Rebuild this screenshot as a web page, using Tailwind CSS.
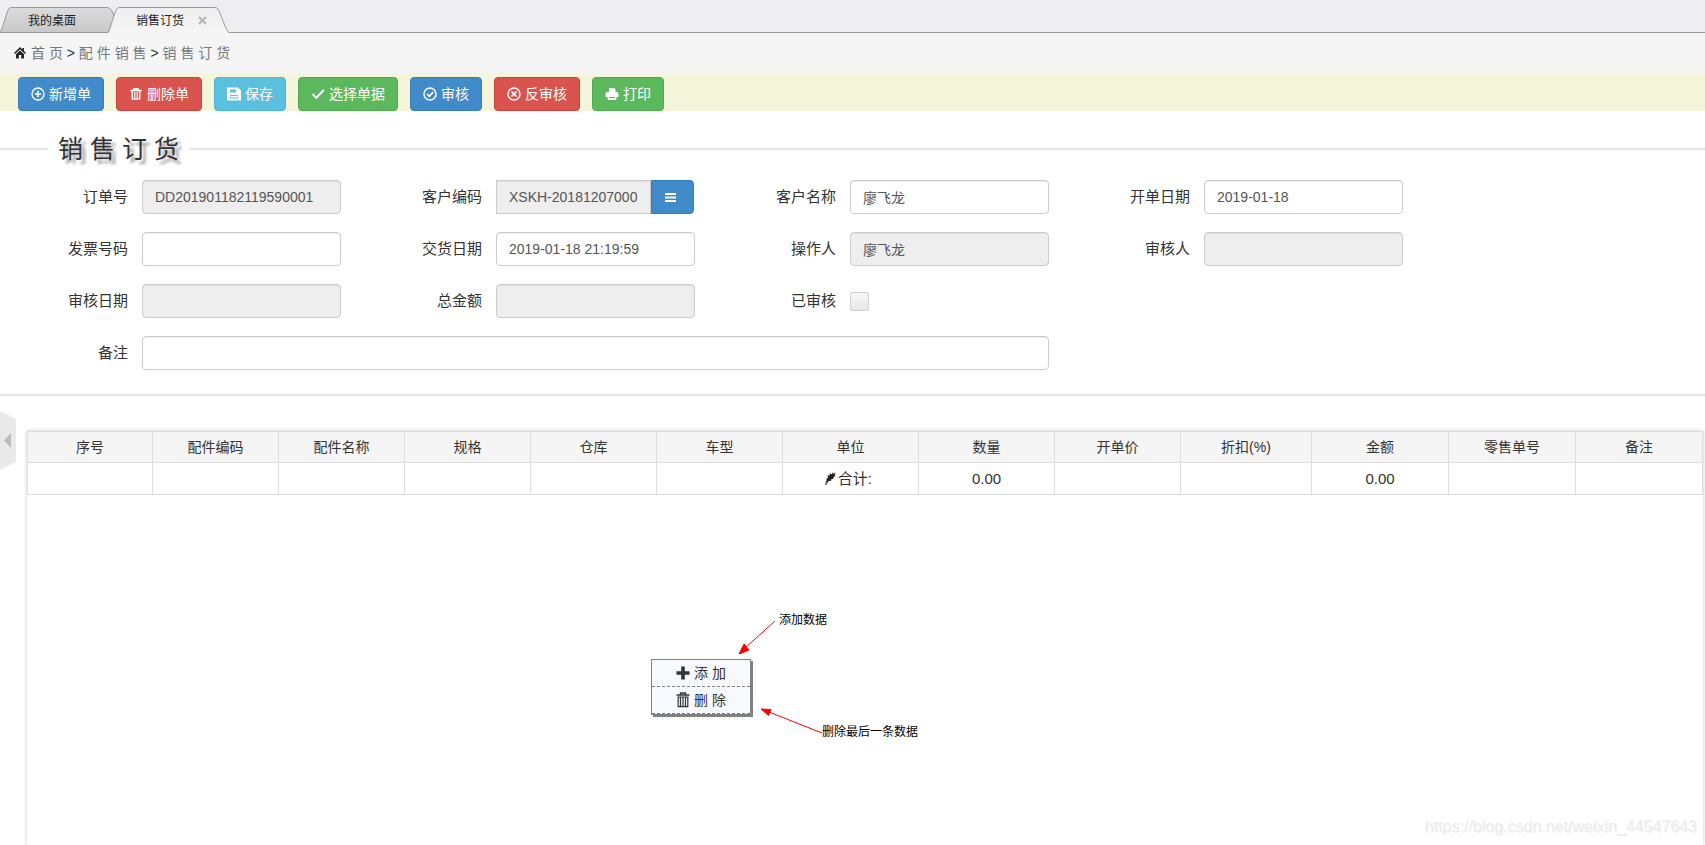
<!DOCTYPE html>
<html lang="zh-CN">
<head>
<meta charset="utf-8">
<title>销售订货</title>
<script src="https://cdn.jsdelivr.net/npm/@tailwindcss/browser@4"></script>
</head>
<body class="relative flex min-h-screen flex-col bg-white font-['Liberation_Sans','Noto_Sans_CJK_SC',sans-serif] text-sm text-[#333]">

<!-- Tabs -->
<nav class="relative flex h-[33px] items-end bg-[#eeeef0] text-xs text-[#222]">
  <div class="absolute inset-x-0 bottom-0 h-px bg-[#999]"></div>
  <a href="#" class="relative flex h-[26px] w-[108px] items-center pl-7">
    <svg class="absolute bottom-0 left-0" width="117" height="26" viewBox="0 0 117 26">
      <defs><linearGradient id="tabIdle" x1="0" y1="0" x2="0" y2="1"><stop offset="0" stop-color="#dcdcdc"/><stop offset="1" stop-color="#c8c8c8"/></linearGradient></defs>
      <path d="M0 25.5C2 24 7 3 9 1.5Q10 .5 12 .5H107Q110 .5 112 4L115 11L108 25.5Z" fill="url(#tabIdle)" stroke="#999"/>
    </svg>
    <span class="relative pt-0.5">我的桌面</span>
  </a>
  <div class="relative flex h-[26px] w-[121px] items-center pl-7">
    <svg class="absolute bottom-0 left-0" width="121" height="26" viewBox="0 0 121 26">
      <defs><linearGradient id="tabOn" x1="0" y1="0" x2="0" y2="1"><stop offset="0" stop-color="#eeeeef"/><stop offset="1" stop-color="#f5f5f5"/></linearGradient></defs>
      <path d="M0 26C2 24 7 3 9 1.5Q10 .5 12 .5H107Q109 .5 110 2C112 5 118 24 121 26Z" fill="url(#tabOn)"/>
      <path d="M0 25.5C2 24 7 3 9 1.5Q10 .5 12 .5H107Q109 .5 110 2C112 5 118 24 121 25.5" fill="none" stroke="#999"/>
    </svg>
    <a href="#" class="relative pt-0.5">销售订货</a>
    <button type="button" aria-label="关闭" class="relative ml-3.5">
      <svg width="9" height="9" viewBox="0 0 9 9"><path d="M1 1L8 8M8 1L1 8" stroke="#b4b4b8" stroke-width="2"/></svg>
    </button>
  </div>
</nav>

<!-- Breadcrumb -->
<div class="flex h-10 items-center bg-[#f5f5f5] pl-3.5 text-[#777]">
  <svg class="mr-[5px]" width="12" height="12" viewBox="0 0 12 12" fill="#222"><path d="M6 0L0 6L1 7L6 2.300L11 7L12 6L10 4V1H8.500V2.500Z"/><path d="M2 7.300L6 3.600L10 7.300V11.500H7.200V8H4.800V11.500H2Z"/></svg>
  <p class="whitespace-pre"><a href="#">首 页</a> <span class="text-[#333]">&gt;</span> <a href="#">配 件 销 售</a> <span class="text-[#333]">&gt;</span> <a href="#">销 售 订 货</a></p>
</div>

<!-- Toolbar -->
<div class="flex flex-wrap gap-3 bg-[#f5f5dc] pt-1 pl-[18px] text-white">
  <button type="button" class="flex h-[34px] items-center gap-1 rounded border border-[#357ebd] bg-[#428bca] px-3">
    <svg width="14" height="14" viewBox="0 0 14 14" fill="none" stroke="currentColor"><circle cx="7" cy="7" r="6" stroke-width="1.300"/><path d="M7 3.800V10.200M3.800 7H10.200" stroke-width="1.500"/></svg>新增单</button>
  <button type="button" class="flex h-[34px] items-center gap-1 rounded border border-[#d43f3a] bg-[#d9534f] px-3">
    <svg width="14" height="14" viewBox="0 0 14 14" fill="none" stroke="currentColor"><path d="M1.500 3.500H12.500M5 3V1.800H9V3" stroke-width="1.500"/><path d="M3.300 4V12H10.700V4" stroke-width="1.500"/><path d="M5.500 5V11M7 5V11M8.500 5V11" stroke-width=".8"/></svg>删除单</button>
  <button type="button" class="flex h-[34px] items-center gap-1 rounded border border-[#46b8da] bg-[#5bc0de] px-3">
    <svg width="14" height="14" viewBox="0 0 14 14" fill="currentColor"><path fill-rule="evenodd" d="M0 .5H11L14 3.500V13.500H0ZM3 2.500V5.500H9V2.500ZM3 8V11.500H11V8Z"/><path d="M3.500 9H10.500V10.500H3.500Z"/></svg>保存</button>
  <button type="button" class="flex h-[34px] items-center gap-1 rounded border border-[#4cae4c] bg-[#5cb85c] px-3">
    <svg width="14" height="14" viewBox="0 0 14 14" fill="none" stroke="currentColor"><path d="M1.500 7L5.300 10.800L12.800 3" stroke-width="2"/></svg>选择单据</button>
  <button type="button" class="flex h-[34px] items-center gap-1 rounded border border-[#357ebd] bg-[#428bca] px-3">
    <svg width="14" height="14" viewBox="0 0 14 14" fill="none" stroke="currentColor"><circle cx="7" cy="7" r="6" stroke-width="1.500"/><path d="M4 7L6.300 9.300L10.200 5" stroke-width="1.700"/></svg>审核</button>
  <button type="button" class="flex h-[34px] items-center gap-1 rounded border border-[#d43f3a] bg-[#d9534f] px-3">
    <svg width="14" height="14" viewBox="0 0 14 14" fill="none" stroke="currentColor"><circle cx="7" cy="7" r="6" stroke-width="1.500"/><path d="M4.500 4.500L9.500 9.500M9.500 4.500L4.500 9.500" stroke-width="1.600"/></svg>反审核</button>
  <button type="button" class="flex h-[34px] items-center gap-1 rounded border border-[#4cae4c] bg-[#5cb85c] px-3">
    <svg width="14" height="14" viewBox="0 0 14 14" fill="currentColor"><path d="M4 1H9L10.500 2.500V5H4Z"/><path d="M2 5H12Q13.500 5.500 13.500 7V10H.5V7Q.5 5.500 2 5Z"/><path d="M2.500 9H11.500V12L10.500 13H3.500L2.500 12Z"/><path d="M4 10.500H10" stroke="#5cb85c" fill="none"/></svg>打印</button>
</div>

<!-- Order form -->
<form class="mt-[19px] border-b-2 border-[#e5e5e5] pb-6">
  <div class="mb-3 flex h-[38px] items-center">
    <div class="h-0.5 w-12 bg-[#e5e5e5]"></div>
    <h1 class="px-2.5 text-[25px] leading-[38px] [text-shadow:4px_4px_3px_#999]">销 售 订 货</h1>
    <div class="h-0.5 flex-1 bg-[#e5e5e5]"></div>
  </div>
  <div class="grid w-full max-w-[1416px] grid-cols-4 gap-y-[18px] text-[#555]">
    <div class="flex items-center pr-[13px]">
      <label for="orderNo" class="mr-3.5 w-32 shrink-0 text-right text-[15px] text-[#333]">订单号</label>
      <input id="orderNo" readonly value="DD201901182119590001" class="h-[34px] min-w-0 flex-1 rounded border border-[#ccc] bg-[#eee] px-3 shadow-[inset_0_1px_1px_rgba(0,0,0,0.075)]">
    </div>
    <div class="flex items-center pr-3.5">
      <label for="custNo" class="mr-3.5 w-32 shrink-0 text-right text-[15px] text-[#333]">客户编码</label>
      <input id="custNo" readonly value="XSKH-20181207000" class="h-[34px] min-w-0 flex-1 border border-[#ccc] bg-[#eee] px-3 shadow-[inset_0_1px_1px_rgba(0,0,0,0.075)]">
      <button type="button" aria-label="选择客户" class="flex h-[34px] w-[43px] shrink-0 items-center rounded-r border border-[#357ebd] bg-[#428bca] pl-[13px]">
        <svg width="11" height="9" viewBox="0 0 11 9" fill="#fff"><path d="M0 0H11V2H0ZM0 3.500H11V5.500H0ZM0 7H11V9H0Z"/></svg>
      </button>
    </div>
    <div class="flex items-center pr-[13px]">
      <label for="custName" class="mr-3.5 w-32 shrink-0 text-right text-[15px] text-[#333]">客户名称</label>
      <input id="custName" value="廖飞龙" class="h-[34px] min-w-0 flex-1 rounded border border-[#ccc] bg-white px-3 shadow-[inset_0_1px_1px_rgba(0,0,0,0.075)]">
    </div>
    <div class="flex items-center pr-[13px]">
      <label for="openDate" class="mr-3.5 w-32 shrink-0 text-right text-[15px] text-[#333]">开单日期</label>
      <input id="openDate" value="2019-01-18" class="h-[34px] min-w-0 flex-1 rounded border border-[#ccc] bg-white px-3 shadow-[inset_0_1px_1px_rgba(0,0,0,0.075)]">
    </div>
    <div class="flex items-center pr-[13px]">
      <label for="invoice" class="mr-3.5 w-32 shrink-0 text-right text-[15px] text-[#333]">发票号码</label>
      <input id="invoice" class="h-[34px] min-w-0 flex-1 rounded border border-[#ccc] bg-white px-3 shadow-[inset_0_1px_1px_rgba(0,0,0,0.075)]">
    </div>
    <div class="flex items-center pr-[13px]">
      <label for="delivery" class="mr-3.5 w-32 shrink-0 text-right text-[15px] text-[#333]">交货日期</label>
      <input id="delivery" value="2019-01-18 21:19:59" class="h-[34px] min-w-0 flex-1 rounded border border-[#ccc] bg-white px-3 shadow-[inset_0_1px_1px_rgba(0,0,0,0.075)]">
    </div>
    <div class="flex items-center pr-[13px]">
      <label for="operator" class="mr-3.5 w-32 shrink-0 text-right text-[15px] text-[#333]">操作人</label>
      <input id="operator" readonly value="廖飞龙" class="h-[34px] min-w-0 flex-1 rounded border border-[#ccc] bg-[#eee] px-3 shadow-[inset_0_1px_1px_rgba(0,0,0,0.075)]">
    </div>
    <div class="flex items-center pr-[13px]">
      <label for="auditor" class="mr-3.5 w-32 shrink-0 text-right text-[15px] text-[#333]">审核人</label>
      <input id="auditor" readonly class="h-[34px] min-w-0 flex-1 rounded border border-[#ccc] bg-[#eee] px-3 shadow-[inset_0_1px_1px_rgba(0,0,0,0.075)]">
    </div>
    <div class="flex items-center pr-[13px]">
      <label for="auditDate" class="mr-3.5 w-32 shrink-0 text-right text-[15px] text-[#333]">审核日期</label>
      <input id="auditDate" readonly class="h-[34px] min-w-0 flex-1 rounded border border-[#ccc] bg-[#eee] px-3 shadow-[inset_0_1px_1px_rgba(0,0,0,0.075)]">
    </div>
    <div class="flex items-center pr-[13px]">
      <label for="total" class="mr-3.5 w-32 shrink-0 text-right text-[15px] text-[#333]">总金额</label>
      <input id="total" readonly class="h-[34px] min-w-0 flex-1 rounded border border-[#ccc] bg-[#eee] px-3 shadow-[inset_0_1px_1px_rgba(0,0,0,0.075)]">
    </div>
    <div class="col-span-2 flex items-center pr-[13px]">
      <label for="audited" class="mr-3.5 w-32 shrink-0 text-right text-[15px] text-[#333]">已审核</label>
      <input id="audited" type="checkbox" class="size-[19px] appearance-none rounded-[2px] border border-[#d0d0d0] bg-linear-to-b from-[#f7f7f7] to-[#e8e8e8]">
    </div>
    <div class="col-span-3 flex items-center pr-[13px]">
      <label for="remark" class="mr-3.5 w-32 shrink-0 text-right text-[15px] text-[#333]">备注</label>
      <input id="remark" class="h-[34px] min-w-0 flex-1 rounded border border-[#ccc] bg-white px-3 shadow-[inset_0_1px_1px_rgba(0,0,0,0.075)]">
    </div>
  </div>
</form>

<!-- Detail lines -->
<main class="mt-[35px] mr-0.5 ml-[27px] flex-1 shadow-[0_0_4px_#ccc]">
  <table class="w-full table-fixed border-collapse text-center">
    <colgroup>
      <col class="w-[125px]"><col class="w-[126px]"><col class="w-[126px]"><col class="w-[126px]"><col class="w-[126px]"><col class="w-[126px]"><col class="w-[136px]"><col class="w-[136px]"><col class="w-[126px]"><col class="w-[131px]"><col class="w-[137px]"><col class="w-[127px]"><col class="w-[127px]">
    </colgroup>
    <thead class="bg-[#f5f5f5]">
      <tr class="h-[31px] *:border *:border-[#ddd] *:font-normal">
        <th>序号</th><th>配件编码</th><th>配件名称</th><th>规格</th><th>仓库</th><th>车型</th><th>单位</th><th>数量</th><th>开单价</th><th>折扣(%)</th><th>金额</th><th>零售单号</th><th>备注</th>
      </tr>
    </thead>
    <tbody>
      <tr class="h-8 text-[15px] leading-5 *:border *:border-[#ddd]">
        <td></td><td></td><td></td><td></td><td></td><td></td>
        <td><span class="flex items-center justify-center gap-0.5"><svg width="11" height="15" viewBox="0 0 12 15"><path d="M1 14.500C1 11 3 8 6 5" fill="none" stroke="#222" stroke-width="1.200"/><path d="M2 10L1.500 7L3 7.500L3 3.500L4.800 4.500L5.500 1.500L7 3L9 .5V2.500L11.500 1L10.500 4L11.500 4.500L9 6.500L9.500 7.500L6.500 8.500L7 10L4 10.300L2 13Z" fill="#222"/></svg>合计:&nbsp;</span></td>
        <td>0.00</td><td></td><td></td><td>0.00</td><td></td><td></td>
      </tr>
    </tbody>
  </table>
</main>

<!-- Side panel handle -->
<button type="button" aria-label="展开侧栏" class="absolute top-[411px] left-0">
  <svg width="16" height="60" viewBox="0 0 16 60"><path d="M0 0L16 8V51L0 59Z" fill="#e9e9e9"/><path d="M11 22V37L4 29.500Z" fill="#bbb"/></svg>
</button>

<!-- Context menu -->
<div role="menu" class="absolute top-[659px] left-[651px] w-[100px] border border-[#808080] bg-[#f8f8ff] shadow-[2px_2px_0_#808080]">
  <button type="button" role="menuitem" class="flex h-[27px] w-full items-center justify-center gap-1 border-b border-dashed border-[#808080]">
    <svg width="14" height="14" viewBox="0 0 14 14"><path d="M7 .5V13.500M.5 7H13.500" stroke="#333" stroke-width="3.600"/></svg>添 加</button>
  <button type="button" role="menuitem" class="flex h-[27px] w-full items-center justify-center gap-1 border-b border-dashed border-[#808080]">
    <svg width="14" height="16" viewBox="0 0 14 16" fill="none" stroke="#333"><path d="M.5 3H13.500M4.500 3V1H9.500V3" stroke-width="1.300"/><path d="M2.200 5V14.700H11.800V5M1.500 5H12.500" stroke-width="1.200"/><path d="M4.500 5V14M7 5V14M9.500 5V14" stroke-width="1.200"/></svg>删 除</button>
</div>

<!-- Annotations -->
<svg class="pointer-events-none absolute top-[615px] left-[735px]" width="90" height="120" viewBox="0 0 90 120" stroke="#f00" fill="#f00" aria-hidden="true">
  <path d="M40 6L9 34M87 118L34 97" fill="none"/>
  <path d="M4 39L9 29L14 35Z"/><path d="M26 94L36 94.500L33.500 100.500Z"/>
</svg>
<p class="absolute top-[612px] left-[779px] text-xs text-black">添加数据</p>
<p class="absolute top-[724px] left-[822px] text-xs text-black">删除最后一条数据</p>
<p class="absolute right-2 bottom-1.5 text-base text-[#ececec] [text-shadow:1px_1px_0_#f4f4f4]">https://blog.csdn.net/weixin_44547643</p>
</body>
</html>
